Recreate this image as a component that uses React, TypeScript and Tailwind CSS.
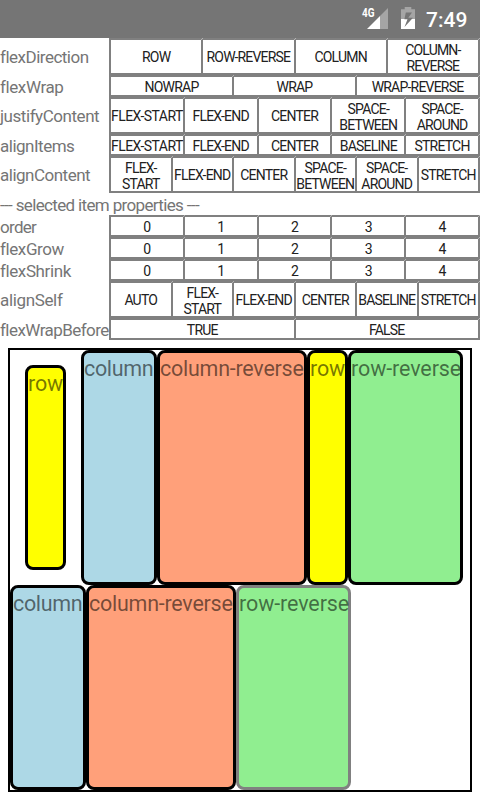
type Group = { label: string; options: string[]; tall?: boolean; tracking?: string };

const containerProps: Group[] = [
  { label: "flexDirection", options: ["ROW", "ROW-REVERSE", "COLUMN", "COLUMN- REVERSE"], tall: true },
  { label: "flexWrap", options: ["NOWRAP", "WRAP", "WRAP-REVERSE"], tracking: "tracking-[-0.4px]" },
  { label: "justifyContent", options: ["FLEX-START", "FLEX-END", "CENTER", "SPACE- BETWEEN", "SPACE- AROUND"], tall: true, tracking: "tracking-[-0.45px]" },
  { label: "alignItems", options: ["FLEX-START", "FLEX-END", "CENTER", "BASELINE", "STRETCH"] },
  { label: "alignContent", options: ["FLEX- START", "FLEX-END", "CENTER", "SPACE- BETWEEN", "SPACE- AROUND", "STRETCH"], tall: true },
];

const itemProps: Group[] = [
  { label: "order", options: ["0", "1", "2", "3", "4"], tracking: "tracking-[-0.7px]" },
  { label: "flexGrow", options: ["0", "1", "2", "3", "4"], tracking: "tracking-[-0.4px]" },
  { label: "flexShrink", options: ["0", "1", "2", "3", "4"], tracking: "tracking-[-0.4px]" },
  { label: "alignSelf", options: ["AUTO", "FLEX- START", "FLEX-END", "CENTER", "BASELINE", "STRETCH"], tall: true, tracking: "tracking-[-0.35px]" },
  { label: "flexWrapBefore", options: ["TRUE", "FALSE"], tracking: "tracking-[-0.55px]" },
];

function PropertyRow({ label, options, tall, tracking }: Group) {
  return (
    <div className={`flex w-full ${tall ? "h-[37px]" : "h-[22px]"}`}>
      <div
        className={`flex w-[109px] shrink-0 items-center text-[17px] leading-[20px] whitespace-nowrap text-[#757575] ${
          tracking ?? "tracking-[-0.5px]"
        } ${tall ? "" : "pt-[2px]"}`}
      >
        <span>{label}</span>
      </div>
      <div className="flex min-w-0 flex-1 border-l-2 border-[#808080]">
        {options.map((option) => (
          <div
            key={option}
            className={`relative flex min-w-0 flex-1 basis-0 items-center justify-center border-y-2 border-r-2 border-[#808080] text-center text-[14px] leading-[16px] text-[#212121] after:absolute after:-top-[2px] after:-right-[2px] after:size-[2px] after:bg-[linear-gradient(135deg,transparent_30%,#b4b4b4_50%,transparent_70%)] ${
              option === "FLEX-START" ? "tracking-[-0.55px]" : "tracking-[-0.8px]"
            } ${tall ? "" : "pt-[2px]"} ${option.includes(" ") ? "pt-[2px]" : ""}`}
          >
            <span className="flex flex-col whitespace-nowrap">
              {option.split(" ").map((line) => (
                <span key={line}>{line}</span>
              ))}
            </span>
          </div>
        ))}
      </div>
    </div>
  );
}

function Item({ text, className }: { text: string; className: string }) {
  return (
    <div className={`shrink-0 rounded-[8px] border-[3px] pt-[3px] text-[21.5px] leading-[25px] whitespace-nowrap text-black/55 ${className}`}>
      {text}
    </div>
  );
}

function StatusBar() {
  return (
    <div className="flex h-[38px] items-center justify-end bg-[#757575] text-white">
      <svg width="84" height="38" viewBox="356 0 84 38" className="mr-[-14px]" aria-hidden="true">
        <text x="362" y="17" fill="#fff" fontFamily="Roboto" fontSize="12.5" fontWeight="700" textLength="12.5" lengthAdjust="spacingAndGlyphs">4G</text>
        <path d="M388 8V29H380V16Z" fill="#a5a5a5" />
        <path d="M380 16V29H367Z" fill="#fff" />
        <path d="M401 9.3H404.7V7H411.3V9.3H415V19H401Z" fill="#a5a5a5" />
        <path d="M401 19H415V29H401Z" fill="#fff" />
        <path d="M405.8 12.4H412L408.3 17.8H413L404.5 27L407.5 19.3H404.4Z" fill="#757575" />
      </svg>
      <span className="mr-[12px] w-[42px] pt-[2px] text-[21px] leading-[36px] font-medium">7:49</span>
    </div>
  );
}

export default function App() {
  return (
    <div className="h-[800px] w-[480px] overflow-hidden bg-white font-[Roboto,sans-serif]">
      <StatusBar />
      {containerProps.map((group) => (
        <PropertyRow key={group.label} {...group} />
      ))}
      <div className="flex h-[22px] items-center pt-[2px] text-[17px] leading-[20px] tracking-[-0.65px] whitespace-nowrap text-[#757575]">
        --- selected item properties ---
      </div>
      {itemProps.map((group) => (
        <PropertyRow key={group.label} {...group} />
      ))}
      <div className="mx-2 mt-2 flex h-[444px] flex-col border-2 border-black">
        <div className="flex h-[235px]">
          <Item text="row" className="m-[15px] w-[41px] border-black bg-[#ffff00] tracking-[-0.2px]" />
          <Item text="column" className="w-[76px] border-black bg-[#add8e6] tracking-[-0.35px]" />
          <Item text="column-reverse" className="w-[150px] border-black bg-[#ffa07a] tracking-[-0.25px]" />
          <Item text="row" className="w-[41px] border-black bg-[#ffff00] tracking-[-0.2px]" />
          <Item text="row-reverse" className="w-[115px] border-black bg-[#90ee90] tracking-[-0.1px]" />
        </div>
        <div className="flex h-[205px]">
          <Item text="column" className="w-[76px] border-black bg-[#add8e6] tracking-[-0.35px]" />
          <Item text="column-reverse" className="w-[150px] border-black bg-[#ffa07a] tracking-[-0.25px]" />
          <Item text="row-reverse" className="w-[115px] border-[#808080] bg-[#90ee90] tracking-[-0.1px]" />
        </div>
      </div>
    </div>
  );
}
